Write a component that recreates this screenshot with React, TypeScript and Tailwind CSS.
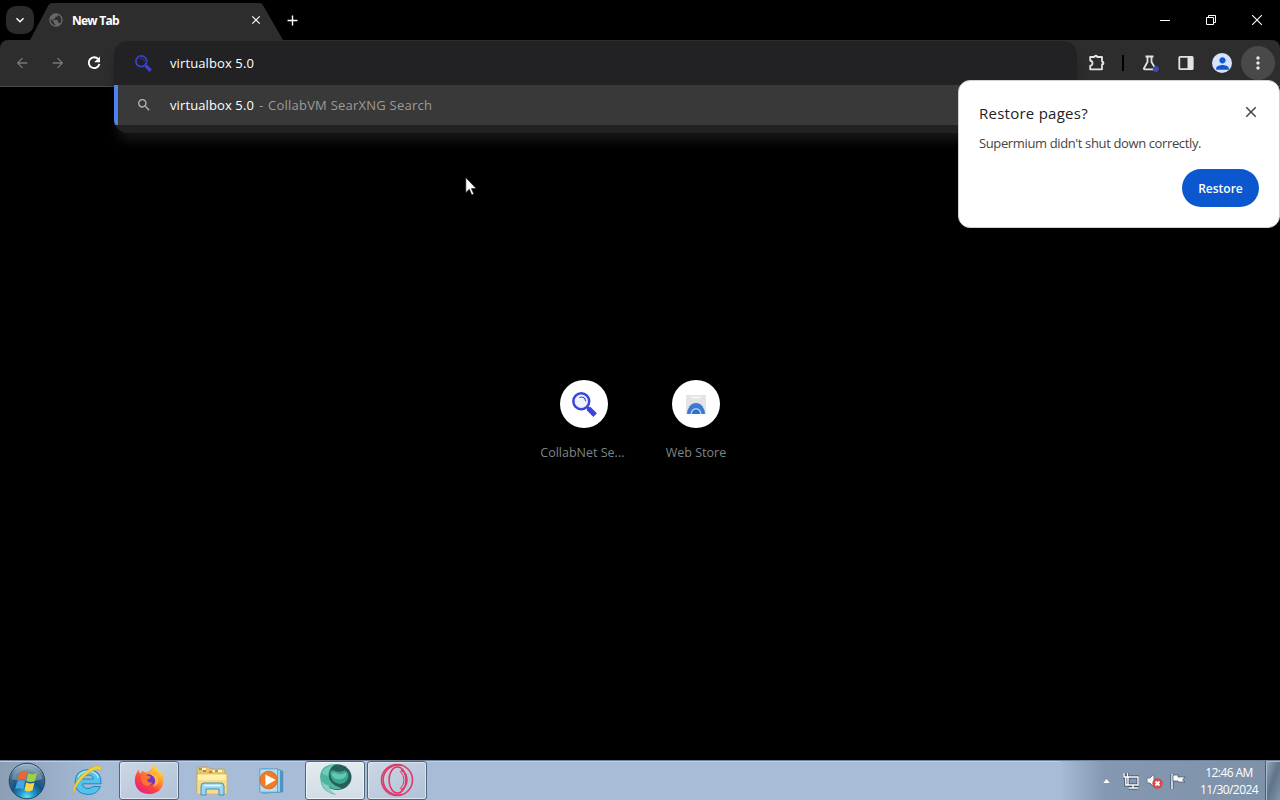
import React from "react";
import {
  MdArrowBack, MdArrowForward, MdMoreVert, MdSearch, MdClose, MdAdd, MdExpandMore, MdPublic, MdPerson,
} from "react-icons/md";

function Magnifier({ className, glass = "none", rim = "#3b46d8" }: { className: string; glass?: string; rim?: string }) {
  return (
    <svg viewBox="0 0 24 24" className={className}>
      <circle cx="8.9" cy="8.9" r="7.6" fill={glass} stroke={rim} strokeWidth="2.4" />
      <path d="M7 5.200Q12 3.500 13.300 9" fill="none" stroke={rim} strokeWidth="1" />
      <path d="M13.800 13.800l3 3" stroke={rim} strokeWidth="2.600" />
      <path d="M15.600 15.600l6.600 6.600" stroke={rim} strokeWidth="4.800" />
    </svg>
  );
}

function TabStrip() {
  return (
    <div className="flex h-10 bg-black">
      <button className="ml-[6px] mt-[6px] flex h-[28px] w-[28px] items-center justify-center rounded-[10px] bg-[#2b2b2b]">
        <MdExpandMore className="h-[16px] w-[16px] text-white" />
      </button>
      <div className="relative -ml-[4px] w-[254px]">
        <svg viewBox="0 0 254 40" className="absolute inset-0 h-10 w-[254px]">
          <path d="M0 40L18 6Q19.500 3 22 3H230Q232 3 233.500 6L253 40Z" fill="#2d2d2d" />
        </svg>
        <div className="relative flex h-10 items-center pl-[18px] pr-[21px]">
          <MdPublic className="h-[16px] w-[16px] text-[#686868]" />
          <span className="ml-[8px] mt-[1px] flex-1 text-[12px] font-bold tracking-[-0.75px] text-white">New Tab</span>
          <MdClose className="h-[14px] w-[14px] text-white" />
        </div>
      </div>
      <button className="flex h-10 w-[16px] items-center justify-center">
        <MdAdd className="h-[17px] w-[17px] shrink-0 text-white" />
      </button>
      <div className="ml-auto flex h-10 items-center text-white">
        <span className="flex w-[46px] justify-center">
          <svg viewBox="0 0 10 10" className="h-[10px] w-[10px]"><path d="M0 5.5H10" stroke="currentColor" /></svg>
        </span>
        <span className="flex w-[46px] justify-center">
          <svg viewBox="0 0 10 10" className="h-[10px] w-[10px]"><path d="M.5 2.5H7.5V9.5H.5ZM2.5 2.5V.5H9.5V7.5H7.5" fill="none" stroke="currentColor" /></svg>
        </span>
        <span className="flex w-[46px] justify-center">
          <svg viewBox="0 0 10 10" className="h-[10px] w-[10px]"><path d="M0 0L10 10M10 0L0 10" stroke="currentColor" strokeWidth="1.1" /></svg>
        </span>
      </div>
    </div>
  );
}

function Toolbar() {
  return (
    <div className="bg-black">
      <div className="flex h-[47px] rounded-t-[8px] border-b border-[#4b4b4b] bg-[#2d2d2d] pb-[1px]">
        <div className="flex h-[46px] items-center pl-[14px]">
          <MdArrowBack className="h-[16px] w-[16px] text-[#777777]" />
          <MdArrowForward className="ml-[20px] h-[16px] w-[16px] text-[#777777]" />
          <svg viewBox="0 0 18 18" className="ml-[19px] h-[18px] w-[18px]">
            <path d="M13.300 5.200A5.400 5.400 0 1 0 14.400 10" fill="none" stroke="#fff" strokeWidth="1.900" />
            <path d="M15 2.500V8.300H9.200Z" fill="#fff" />
          </svg>
        </div>
        <div className="ml-auto flex h-[46px] items-center pr-[5px]">
          <svg viewBox="0 0 20 20" className="h-[20px] w-[20px]">
            <path d="M3.200 4H7.200Q7.600 3 8.700 3T10.200 4H15V8.500Q16.200 8.600 16.200 10T15 11.500V16.300H3.200V12.800Q5.500 12.400 5.500 10.200T3.200 7.500Z" fill="none" stroke="#e3e3e3" strokeWidth="1.800" strokeLinejoin="round" />
            <path d="M7.200 3.600a1.800 1.800 0 0 1 3.600 0ZM15.500 8.200a1.900 1.900 0 0 1 0 3.800Z" fill="#e3e3e3" />
          </svg>
          <div className="ml-[15px] h-[16px] w-[2px] bg-black" />
          <svg viewBox="0 0 20 20" className="ml-[16px] h-[20px] w-[20px]">
            <path d="M5.500 3.500H13.500M7.500 4V9L4 15.200Q3.500 16.300 4.800 16.300H14.6Q15.9 16.300 15.200 15.200L11.500 9V4" fill="none" stroke="#e3e3e3" strokeWidth="1.8" />
            <circle cx="15.800" cy="16" r="3" fill="#3f4ab0" />
          </svg>
          <svg viewBox="0 0 16 16" className="ml-[18px] h-[16px] w-[16px]">
            <rect x="1.3" y="1.8" width="13.4" height="12.4" rx="0.8" fill="none" stroke="#e3e3e3" strokeWidth="1.8" />
            <path d="M9.5 1.5H15V14.5H9.5Z" fill="#e3e3e3" />
          </svg>
          <div className="ml-[18px] flex h-[20px] w-[20px] items-center justify-center rounded-full bg-[#d7e3fa]">
            <MdPerson className="h-[19px] w-[19px] text-[#1259d0]" />
          </div>
          <div className="ml-[9px] flex h-[34px] w-[34px] items-center justify-center rounded-full bg-[#494949]">
            <MdMoreVert className="h-[20px] w-[20px] text-[#e8e8e8]" />
          </div>
        </div>
      </div>
    </div>
  );
}

function Omnibox() {
  return (
    <div className="absolute left-[114px] top-[41px] h-[92px] w-[963px] overflow-hidden rounded-[14px] bg-[#222225] text-[13px] shadow-[0_12px_12px_-4px_#161616]">
      <div className="flex h-[44px] items-center pl-[21px]">
        <Magnifier className="h-[17px] w-[17px]" rim="#3c42cc" />
        <span className="ml-[18px] mt-[2px] tracking-[0.11px] text-white">virtualbox 5.0</span>
      </div>
      <div className="flex h-[40px] items-center border-l-[4px] border-[#4c83f0] bg-[#393939] pl-[18px]">
        <MdSearch className="h-[16px] w-[16px] text-[#b5b5b5]" />
        <span className="ml-[18px] mt-[2px] w-[84px] whitespace-nowrap tracking-[0.11px] text-white">virtualbox 5.0</span>
        <span className="ml-[5px] mt-[2px] w-[9px] text-[#9b9b9b]">-</span>
        <span className="mt-[2px] whitespace-nowrap tracking-[0.23px] text-[#9b9b9b]">CollabVM SearXNG Search</span>
      </div>
    </div>
  );
}

function RestoreDialog() {
  return (
    <div className="absolute left-[958px] top-[80px] flex h-[148px] w-[322px] flex-col rounded-[12px] border border-[#d0d0d0] bg-white pl-[20px] pr-[20px] text-[#222]">
      <div className="mt-[20px] flex h-[24px] items-center justify-between">
        <span className="text-[15px] tracking-[0.25px]">Restore pages?</span>
        <MdClose className="-mt-[3px] -mr-[1px] h-[18px] w-[18px] text-[#474747]" />
      </div>
      <div className="mt-[8px] h-[20px] whitespace-nowrap text-[13px] leading-[20px] tracking-[-0.37px] text-[#444]">Supermium didn't shut down correctly.</div>
      <button className="ml-auto mt-[16px] flex h-[38px] w-[77px] items-center justify-center rounded-full bg-[#0b57d0] pt-[2px] text-[12px] font-semibold text-white">Restore</button>
    </div>
  );
}

function Shortcut({ label, children }: { label: string; children: React.ReactNode }) {
  return (
    <div className="flex w-[112px] flex-col items-center">
      <div className="flex h-[48px] w-[48px] items-center justify-center rounded-full bg-white">{children}</div>
      <div className="mt-[15px] w-[88px] overflow-hidden whitespace-nowrap text-center text-[12.5px] leading-[20px] text-[#7c8587]">{label}</div>
    </div>
  );
}

function NewTabPage() {
  return (
    <div className="flex h-[673px] justify-center bg-black pt-[293px]">
      <Shortcut label={"CollabNet Se...\u00a0"}>
        <Magnifier className="h-[25px] w-[25px]" glass="#eef2ff" />
      </Shortcut>
      <Shortcut label="Web Store">
        <svg viewBox="0 0 24 24" className="h-[24px] w-[24px]">
          <path d="M2 3H22V22H2Z" fill="#e3e3e8" />
          <path d="M8 5.5H16" stroke="#f6f6f8" strokeWidth="2" strokeLinecap="round" />
          <path d="M3 22a9 11 0 0 1 18 0Z" fill="#3f78d2" />
          <path d="M6.500 22a5.500 6 0 0 1 11 0Z" fill="#a9cdf5" />
          <path d="M8 22a4 4.500 0 0 1 8 0Z" fill="#2d72c5" />
        </svg>
      </Shortcut>
    </div>
  );
}

function StartOrb() {
  return (
    <svg viewBox="0 0 38 38" className="h-[38px] w-[38px]">
      <defs>
        <radialGradient id="orb" cx="50%" cy="95%" r="90%">
          <stop offset="0" stopColor="#65e2f5" /><stop offset=".22" stopColor="#229bcd" /><stop offset=".5" stopColor="#125584" /><stop offset=".78" stopColor="#416885" /><stop offset="1" stopColor="#9db7cb" />
        </radialGradient>
      </defs>
      <circle cx="19" cy="19" r="17.8" fill="url(#orb)" stroke="#29455f" />
      <path d="M3.500 17a16 16 0 0 1 31 0Q19 22 3.500 17Z" fill="#bfd2e0" opacity=".35" />
      <path d="M11.800 10.500Q15 8 19 10.500L17.300 18Q13.500 15.800 9.500 18Z" fill="#ed6531" />
      <path d="M20.200 11.200Q24 13.500 29 11L27 19Q22.500 21 18.500 18.700Z" fill="#a0cf45" />
      <path d="M9.200 19.400Q13 17.200 17 19.500L15.200 27.500Q11.500 25 7.200 27.200Z" fill="#47a5e4" />
      <path d="M18.200 20.200Q22 22.500 26.500 20.500L24.500 28.300Q20.500 30.500 16.500 28.200Z" fill="#fcd449" />
    </svg>
  );
}

function ExplorerE() {
  return (
    <svg viewBox="0 0 32 32" className="h-[32px] w-[32px]">
      <path fillRule="evenodd" d="M30 19.800H11.500Q12 24.500 17 24.500Q20.500 24.500 22 22.500H29.300Q26.500 30.500 17 30.500Q4 30 4 18Q4.500 6 17 5.500Q31 6 30 19.800ZM11.500 15H22.500Q22 11 17 11Q12.500 11 11.500 15Z" fill="#53c3ed" stroke="#2386be" strokeWidth="1" />
      <path d="M7 13Q10 7.500 17 7.200Q25 7.500 27.500 14" fill="none" stroke="#b3edff" strokeWidth="1.200" />
      <path d="M3 30C-1 25 10 8 22 3C28 .5 32 2 29 7C28 4 22 6 16 10.500C8 17 3 25 3 30Z" fill="#f3cf38" stroke="#d3a829" strokeWidth=".5" />
    </svg>
  );
}

function Firefox() {
  return (
    <svg viewBox="0 0 32 32" className="h-[31px] w-[31px]">
      <defs>
        <linearGradient id="fox" x1=".85" y1=".05" x2=".2" y2=".9">
          <stop offset="0" stopColor="#ffe64a" /><stop offset=".35" stopColor="#ff9b30" /><stop offset=".68" stopColor="#fb443e" /><stop offset="1" stopColor="#ea247b" />
        </linearGradient>
      </defs>
      <path d="M20 1C23 3 25 6 26 9L28 8C34 18 29 31 16 31C6 31 0 24 1 15Q2 9 5 6L6 10L9 7L12 9Q18 7 18 4Z" fill="url(#fox)" />
      <circle cx="16.5" cy="16" r="6" fill="#7038c9" />
      <path d="M7 13Q11 10 17 13Q17 15.500 13.500 16Q14 20 19 19Q15 25 10 21Q7 18 7 13Z" fill="#ff7330" />
      <path d="M14 10Q21 6 24.500 13Q27 21 20 24Q24 18 20 13Q17 10 14 10Z" fill="#ffb636" />
    </svg>
  );
}

function Folder() {
  return (
    <svg viewBox="0 0 34 32" className="h-[32px] w-[34px]">
      <path d="M2 4Q2 2 4 2H13L15 4H28Q30 4 30 7V28H2Z" fill="#e9c56b" stroke="#c59a42" strokeWidth=".7" />
      <path d="M5 4H11M18 6H27" stroke="#fff7c9" strokeWidth="2" />
      <path d="M4 4h3M20 6h3" stroke="#528a4e" strokeWidth="1.5" />
      <path d="M8 6h3M14 7h3" stroke="#cf5b44" strokeWidth="1.500" />
      <path d="M2 9H32V29H2Z" fill="#f5dd8a" stroke="#d5ad55" strokeWidth=".6" />
      <path d="M3 9.500H31V15H3Z" fill="#fff1a9" />
      <path d="M6 30V21Q6 18 9 18H26Q29 18 29 21V30H24V24H11V30Z" fill="#9bd5f3" stroke="#438ebd" />
      <path d="M9 20.500H26" stroke="#e5f8ff" strokeWidth="1.500" />
    </svg>
  );
}

function MediaPlayer() {
  return (
    <svg viewBox="0 0 30 30" className="h-[28px] w-[28px]">
      <path d="M7 3L27 4V27L7 28Z" fill="#4f91c2" />
      <path d="M5 2L24 3V27L5 28Z" fill="#a4d8ed" stroke="#4a92bd" />
      <path d="M2 2H21V27H2Z" fill="#b6dcef" stroke="#5d9dc2" />
      <circle cx="11.5" cy="14" r="9.4" fill="#f17c22" stroke="#cd6731" />
      <path d="M8 8L19 14L8 20Z" fill="#fff" />
    </svg>
  );
}

function Supermium() {
  return (
    <svg viewBox="0 0 32 32" className="h-[33px] w-[33px]">
      <ellipse cx="17.500" cy="13.800" rx="14" ry="12.500" fill="#285e5a" />
      <path d="M1 13Q2 1 17 1Q11 3 10 9Q8 18 16 22L22 24.500Q13 27 9.500 22.500Q10 28 17 31Q5 29 2 20Z" fill="#49b69d" />
      <path d="M3 9Q7 2 16 1.500Q9 4 9 12Q5 13 3 9Z" fill="#70cbb7" />
      <path d="M11 11Q10 7 14 7Q19 10 25 7Q30 10 28 15Q25 21 19 20Q12 19 11 11Z" fill="#3aa58f" />
      <path d="M12 10Q15 8 19 11Q24 11 27 9Q27 15 20 16Q13 16 12 10Z" fill="#60c9b0" />
      <path d="M2 18Q6 21 9.500 22Q11 28 18 31Q5 29 2 18Z" fill="#91cec1" />
    </svg>
  );
}

function Opera() {
  return (
    <svg viewBox="0 0 34 34" className="h-[34px] w-[34px]">
      <g fill="none" stroke="#df3a69" strokeWidth="1.6">
        <circle cx="17" cy="17" r="15.500" />
        <path d="M22 2.500A15 15 0 1 0 22 31.500" />
        <ellipse cx="17.500" cy="17" rx="8.500" ry="13" />
        <path d="M21 7Q27 10 27 17T21 27" />
        <path d="M20 8Q24 12 24 17T20 26" strokeWidth="1" />
      </g>
    </svg>
  );
}

function AppButton({ active, children }: { active?: boolean; children: React.ReactNode }) {
  return (
    <div className={active
      ? "flex h-[39px] w-[60px] items-center justify-center rounded-[3px] border border-[#526478] bg-linear-to-b from-[#e5ebef] to-[#d0dce5] pb-[2px] shadow-[inset_0_0_0_1px_#eef4fa]"
      : "flex h-[39px] w-[60px] items-center justify-center rounded-[3px] border border-[#526478] bg-linear-to-br from-[#cbd7e4] to-[#b1c2d7] pb-[2px] shadow-[inset_0_0_0_1px_#dae5ef]"}>
      {children}
    </div>
  );
}

function Taskbar() {
  return (
    <div className="flex h-[40px] border-t border-[#718399] bg-linear-to-r from-[#8b9eb6] via-[#a6bcd7] via-8% to-[#a6bcd7] shadow-[inset_0_1px_0_#bdcee0]">
      <div className="flex w-[119px] items-center pl-[8px]"><StartOrb /><span className="-mt-[2px] ml-[25px]"><ExplorerE /></span></div>
      <AppButton><Firefox /></AppButton>
      <div className="flex w-[126px] items-center pl-[16px]"><Folder /><span className="ml-[29px]"><MediaPlayer /></span></div>
      <AppButton active><Supermium /></AppButton>
      <div className="ml-[2px]"><AppButton><Opera /></AppButton></div>
      <div className="ml-auto flex w-[220px] items-center bg-linear-to-r from-[#a6bcd7] via-[#8499b1] via-20% to-[#7d91a9] text-white">
        <svg viewBox="0 0 8 5" className="ml-[43px] h-[4px] w-[7px]"><path d="M0 5L4 0L8 5Z" fill="white" /></svg>
        <svg viewBox="0 0 16 18" className="ml-[13px] h-[18px] w-[16px]">
          <path d="M5 5H15V13H5ZM10 13V16M5.500 16H15M1 1V5H4.500V1M2.800 5V13H5" fill="none" stroke="#39495b" strokeWidth="2.800" />
          <path d="M5 5H15V13H5ZM10 13V16M5.500 16H15M1 1V5H4.500V1M2.800 5V13H5" fill="none" stroke="#fff" strokeWidth="1.4" />
        </svg>
        <svg viewBox="0 0 18 18" className="ml-[7px] h-[18px] w-[18px]">
          <path d="M1 6H4L8 2V15L4 11H1Z" fill="#fff" stroke="#66788c" />
          <circle cx="11.5" cy="11.500" r="5.200" fill="#d9484b" />
          <path d="M9.5 9.5L13.5 13.5M13.500 9.500L9.500 13.500" stroke="#fff" strokeWidth="1.8" />
        </svg>
        <svg viewBox="0 0 16 18" className="ml-[6px] h-[18px] w-[16px]">
          <path d="M2 2V17" stroke="#35485d" strokeWidth="3" /><path d="M2 2V17" stroke="#fff" strokeWidth="1.5" />
          <path d="M3 3H8V5H15L12.5 8L15 10H8V9H3Z" fill="#fff" stroke="#485c71" strokeWidth=".8" />
        </svg>
        <div className="ml-[13px] w-[60px] whitespace-nowrap text-center text-[12px] leading-[17px] tracking-[-0.56px]">
          <div>12:46 AM</div><div>11/30/2024</div>
        </div>
        <div className="ml-auto h-[39px] w-[15px] border-l border-[#495c72] bg-linear-to-br from-[#98aabd] via-[#5f7389] to-[#8297ac] shadow-[inset_1px_1px_0_#a8b9ca]" />
      </div>
    </div>
  );
}

export default function App() {
  return (
    <div className="relative h-[800px] w-[1280px] overflow-hidden bg-black font-['Open_Sans','Noto_Sans',sans-serif]">
      <TabStrip />
      <Toolbar />
      <NewTabPage />
      <Taskbar />
      <Omnibox />
      <RestoreDialog />
      <svg viewBox="0 0 12 20" className="absolute left-[465px] top-[177px] h-[19px] w-[12px]">
        <path d="M.5 .5V16.500L4.200 13L6.800 19L9 18L6.500 12.200H11.500Z" fill="#fff" stroke="#111" strokeWidth=".7" />
      </svg>
    </div>
  );
}
